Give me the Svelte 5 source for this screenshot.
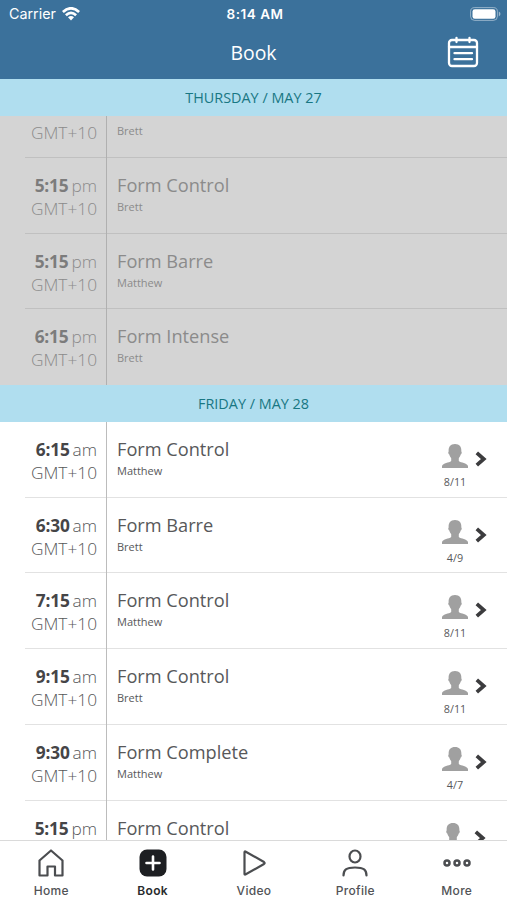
<!-- App.svelte – class booking schedule -->
<script lang="ts">
  type Session = { time: string; half: string; name: string; coach: string; spots?: string };

  const thursday: Session[] = [
    { time: '9:15', half: 'am', name: 'Form Control', coach: 'Brett' },
    { time: '5:15', half: 'pm', name: 'Form Control', coach: 'Brett' },
    { time: '5:15', half: 'pm', name: 'Form Barre', coach: 'Matthew' },
    { time: '6:15', half: 'pm', name: 'Form Intense', coach: 'Brett' },
  ];

  const friday: Session[] = [
    { time: '6:15', half: 'am', name: 'Form Control', coach: 'Matthew', spots: '8/11' },
    { time: '6:30', half: 'am', name: 'Form Barre', coach: 'Brett', spots: '4/9' },
    { time: '7:15', half: 'am', name: 'Form Control', coach: 'Matthew', spots: '8/11' },
    { time: '9:15', half: 'am', name: 'Form Control', coach: 'Brett', spots: '8/11' },
    { time: '9:30', half: 'am', name: 'Form Complete', coach: 'Matthew', spots: '4/7' },
    { time: '5:15', half: 'pm', name: 'Form Control', coach: 'Brett', spots: '10/11' },
  ];

  const tabs = ['Home', 'Book', 'Video', 'Profile', 'More'];
  let active = 'Book';
</script>

{#snippet row(s: Session)}
  <li class="row">
    <div class="when">
      <div class="time"><b>{s.time}</b><span>{s.half}</span></div>
      <div class="zone">GMT+10</div>
    </div>
    <div class="what">
      <div class="name">{s.name}</div>
      <div class="coach">{s.coach}</div>
    </div>
    {#if s.spots}
      <div class="spots">
        <svg width="26" height="24" viewBox="0 0 26 24">
          <path fill="#a0a0a0" d="M13 0C8.400 0 6.200 3 6.700 7.500C5.900 7.600 6.200 10 7.300 10.600C7.700 12.500 8.700 13.500 9.200 14.200V17C7 19 1 18.800 0 22V24H26V22C25 18.800 19 19 16.800 17V14.200C17.300 13.500 18.300 12.500 18.700 10.600C19.800 10 20.100 7.600 19.300 7.500C19.800 3 17.600 0 13 0Z" />
        </svg>
        <span>{s.spots}</span>
      </div>
      <svg class="chevron" width="12" height="16" viewBox="0 0 12 16">
        <path d="M1.800 1.800L8.800 8L1.800 14.200" fill="none" stroke="#3c3c3e" stroke-width="3.700" />
      </svg>
    {/if}
  </li>
{/snippet}

<div class="screen">
  <header>
    <div class="status">
      <div class="carrier">
        <span>Carrier</span>
        <svg width="18" height="14" viewBox="0 0 18 14" fill="none" stroke="#fff" stroke-width="2.700">
          <path d="M.9 5Q9-2.400 17.100 5" />
          <path d="M3.900 8.200Q9 3.600 14.100 8.200" />
          <path d="M6 10.300Q9 7.700 12 10.300L9 13.500Z" fill="#fff" stroke="none" />
        </svg>
      </div>
      <div class="clock">8:14 AM</div>
      <svg class="battery" width="31" height="14" viewBox="0 0 31 14">
        <rect x=".6" y=".6" width="26.800" height="12.800" rx="4" fill="none" stroke="#fff" stroke-opacity=".45" />
        <rect x="2.500" y="2.300" width="23" height="9.400" rx="2.300" fill="#fff" />
        <path d="M28.800 4.600Q30.500 5.500 30.500 7T28.800 9.400Z" fill="#fff" opacity=".5" />
      </svg>
    </div>
    <div class="titlebar">
      <h1>Book</h1>
      <svg class="calendar" width="32" height="32" viewBox="0 0 32 32" fill="none" stroke="#fff" stroke-width="2.300" stroke-linecap="round">
        <rect x="2" y="4" width="28" height="26" rx="3" />
        <path d="M2 11H30M9.500 1.800V6M22.500 1.800V6" />
        <path d="M7.500 17.200H25M7.500 23.200H25" />
      </svg>
    </div>
  </header>

  <main>
    <h2>THURSDAY / MAY 27</h2>
    <ul class="past">
      {#each thursday as s}{@render row(s)}{/each}
    </ul>
    <h2>FRIDAY / MAY 28</h2>
    <ul>
      {#each friday as s}{@render row(s)}{/each}
    </ul>
  </main>

  <nav>
    {#each tabs as tab}
      <button class:active={tab === active} on:click={() => (active = tab)}>
        <svg width="28" height="28" viewBox="0 0 28 28" fill="none" stroke="#4b4d50" stroke-width="2.200" stroke-linejoin="round" stroke-linecap="round">
          {#if tab === 'Home'}
            <path d="M2.500 11.500L14 1.500L25.500 11.500V26.500H18V17.500H10.500V26.500H2.500Z" />
          {:else if tab === 'Book'}
            <rect x=".5" y=".5" width="27" height="27" rx="7.500" fill="#1d1f22" stroke="none" />
            <path d="M14 7.500V20.500M7.500 14H20.500" stroke="#fff" stroke-width="2.600" />
          {:else if tab === 'Video'}
            <path d="M4.500 3.300V24.700Q4.500 26 5.800 25.300L24 15Q25.300 14 24 13L5.800 2.700Q4.500 2 4.500 3.300Z" />
          {:else if tab === 'Profile'}
            <ellipse cx="14" cy="7.500" rx="5.500" ry="6" />
            <path d="M2.500 26.500C2.500 21 5 18.500 14 18.500S25.500 21 25.500 26.500" />
          {:else}
            <g stroke-width="2.500">
              <circle cx="4" cy="14" r="2.500" />
              <circle cx="14" cy="14" r="2.500" />
              <circle cx="24" cy="14" r="2.500" />
            </g>
          {/if}
        </svg>
        <span>{tab}</span>
      </button>
    {/each}
  </nav>
</div>

<style>
  .screen {
    display: flex;
    flex-direction: column;
    height: 900px;
    overflow: hidden;
    background: #fff;
    font-family: 'Open Sans', 'Noto Sans', sans-serif;
    color: #57585a;
  }

  header {
    flex: none;
    height: 79px;
    background: #3b719b;
    color: #fff;
  }

  .status {
    display: grid;
    grid-template-columns: 1fr auto 1fr;
    align-items: center;
    height: 27px;
    padding: 0 6px 0 9px;
    font-family: Inter, sans-serif;
    font-size: 13.5px;
  }

  .carrier {
    display: flex;
    align-items: center;
    gap: 6px;
    font-size: 14.3px;
  }

  .clock {
    font-weight: 600;
    letter-spacing: 0.5px;
  }

  .battery {
    justify-self: end;
  }

  .titlebar {
    display: grid;
    grid-template-columns: 1fr auto 1fr;
    align-items: center;
    height: 50px;
    padding: 0 28px;
  }

  h1 {
    grid-column: 2;
    margin: 0;
    font-size: 19.4px;
    font-weight: 400;
  }

  .calendar {
    justify-self: end;
  }

  main {
    flex: 1;
    min-height: 0;
    overflow: hidden;
  }

  h2 {
    margin: 0;
    height: 36.8px;
    line-height: 37px;
    background: #b0deef;
    color: #187783;
    font-size: 14.4px;
    font-weight: 400;
    text-align: center;
  }

  ul {
    list-style: none;
    margin: 0;
    padding: 0;
  }

  .past {
    display: flex;
    flex-direction: column;
    justify-content: flex-end;
    height: 269.4px;
    overflow: hidden;
    background: #d4d4d4;
    color: #8b8b8b;
  }

  .row {
    flex: none;
    display: flex;
    height: 75.75px;
    margin-left: 25px;
    box-sizing: border-box;
    border-bottom: 1px solid #e2e2e2;
  }

  .past .row {
    border-color: #c0c0c0;
  }

  .past .row:last-child {
    border-color: transparent;
  }

  .when {
    width: 82px;
    margin-bottom: -1px;
    box-sizing: border-box;
    padding: 16px 9px 0 0;
    border-right: 1px solid #bcbcbc;
    text-align: right;
    font-size: 17.3px;
    font-weight: 300;
    line-height: 23px;
  }

  .past .when {
    border-color: #b0b0b0;
  }

  .time b {
    margin-right: 3px;
    font-weight: 700;
    letter-spacing: -0.2px;
    color: #454547;
  }

  .past .time b {
    color: #7c7c7c;
  }

  .what {
    flex: 1;
    padding: 16px 0 0 10px;
  }

  .name {
    font-size: 18.2px;
    line-height: 23px;
  }

  .coach {
    font-size: 11px;
    line-height: 20px;
  }

  .spots {
    display: flex;
    flex-direction: column;
    align-items: center;
    width: 40px;
    padding-top: 22px;
    font-size: 10.8px;
  }

  .spots span {
    margin-top: 6px;
    line-height: 15px;
  }

  .chevron {
    margin: 29px 20px 0 0;
  }

  .row:last-child .spots {
    width: 43px;
  }

  .row:last-child .chevron {
    margin-right: 21px;
  }

  nav {
    flex: none;
    display: grid;
    grid-template-columns: repeat(5, 1fr);
    height: 60px;
    box-sizing: border-box;
    border-top: 1px solid #dadada;
    background: #fff;
  }

  button {
    display: flex;
    flex-direction: column;
    align-items: center;
    gap: 6px;
    padding: 8px 0 0 1px;
    border: none;
    background: none;
    color: #515356;
    font: 500 12px/15px Inter, sans-serif;
    letter-spacing: 0.3px;
  }

  button.active {
    color: #292b2d;
    font-weight: 600;
  }
</style>
